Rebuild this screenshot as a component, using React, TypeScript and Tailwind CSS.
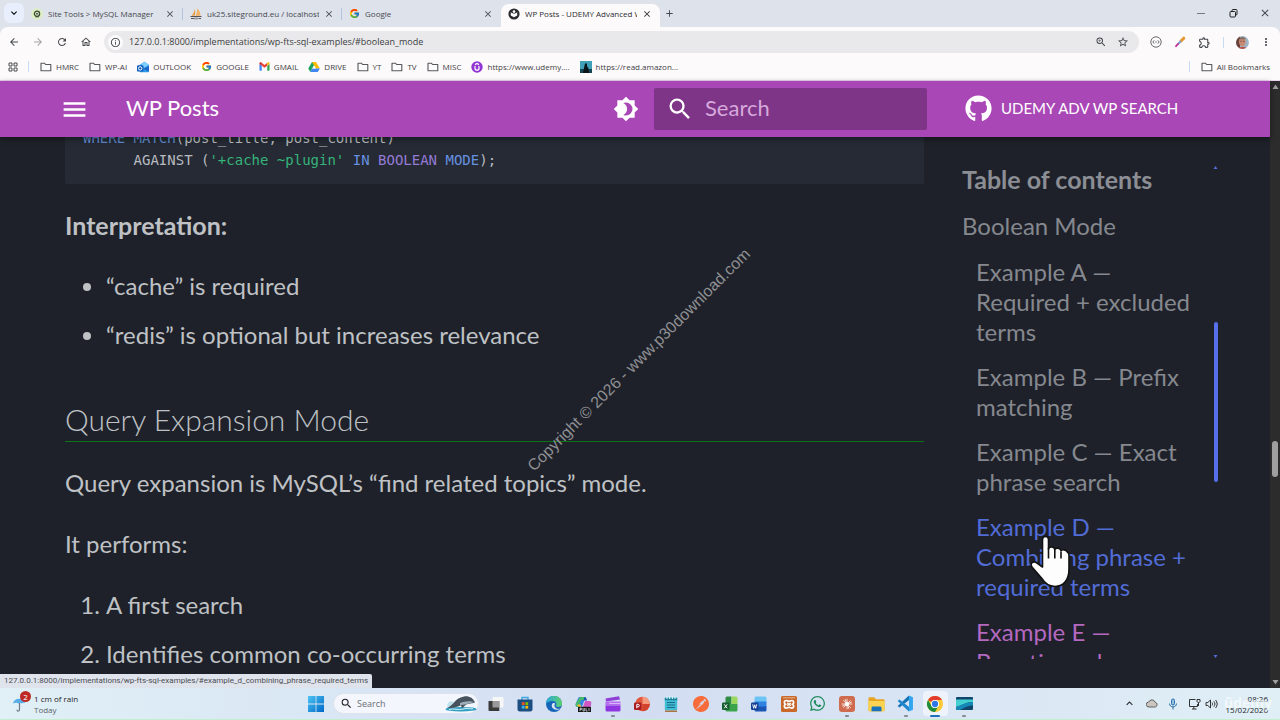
import React from 'react';
import { FaGithub, FaWhatsapp } from 'react-icons/fa';
import { FcGoogle } from 'react-icons/fc';
import { SiPostman } from 'react-icons/si';
import {
  MdAdd,
  MdArrowBack,
  MdArrowForward,
  MdClose,
  MdInfoOutline,
  MdKeyboardArrowDown,
  MdKeyboardArrowUp,
  MdMenu,
  MdMoreVert,
  MdOutlineExtension,
  MdOutlineHome,
  MdRefresh,
  MdSearch,
  MdStarBorder,
  MdZoomIn,
} from 'react-icons/md';

/* ---------- small drawings ---------- */

function FolderIcon() {
  return (
    <svg width="12" height="12" viewBox="0 0 12 12" fill="none" stroke="#55585c" strokeWidth="1.1">
      <path d="M1 2.2h3.4l1.2 1.3h5.2v6.3H1z" strokeLinejoin="round" />
    </svg>
  );
}

function SiteGroundIcon() {
  return (
    <svg width="12" height="12" viewBox="0 0 12 12">
      <circle cx="6" cy="6" r="5.8" fill="#dcefc0" />
      <circle cx="6" cy="5.8" r="2.6" fill="none" stroke="#3c4a3a" strokeWidth="1.3" />
      <circle cx="6" cy="5.8" r="1" fill="#4b5b47" />
      <path d="M4.4 8.8h3.4" stroke="#3c4a3a" strokeWidth="1" />
    </svg>
  );
}

function PhpMyAdminIcon() {
  return (
    <svg width="12" height="12" viewBox="0 0 12 12">
      <path d="M4.6 1c.8 2 .8 4.5.2 6.8H1.5C3.2 6 4.3 3.5 4.6 1z" fill="#e9a04a" />
      <path d="M7 .5c2.500 2 3.500 4.500 3.500 7.300H5.500C6.800 5.500 7.200 3 7 .5z" fill="#f3b263" />
      <path d="M.5 8.500h11M1 10.500h3M5 9.500v2M7 9.500v2M8.500 10.500H11" stroke="#55535a" strokeWidth="1" />
    </svg>
  );
}

function WpPostsIcon() {
  return (
    <svg width="12" height="12" viewBox="0 0 12 12">
      <circle cx="6" cy="6" r="5.600" fill="#2b2c30" />
      <path d="M2.800 4.600 6 5.800l3.200-1.200v3L6 9.200 2.800 7.600z" fill="#fff" />
      <circle cx="6" cy="3.600" r="1.300" fill="#fff" />
    </svg>
  );
}

function OutlookIcon() {
  return (
    <svg width="12" height="12" viewBox="0 0 12 12">
      <path d="M2.500 4 7.500.8 12 4v6.200c0 .6-.4 1-1 1H3.500c-.6 0-1-.4-1-1z" fill="#2f9be8" />
      <path d="M4 3 8 .8l3.800 3-4.300 3z" fill="#7fd0ff" />
      <path d="M12 5v5.500L6 7.800z" fill="#1c66c9" />
      <rect x="0" y="4.200" width="6.400" height="6.400" rx="1.200" fill="#1560bd" />
      <circle cx="3.200" cy="7.400" r="1.700" fill="none" stroke="#fff" />
    </svg>
  );
}

function GmailIcon() {
  return (
    <svg width="11" height="11" viewBox="0 0 24 24">
      <path d="M1 20V6.500l5 3.700V21H2.500A1.500 1.500 0 0 1 1 20z" fill="#4285f4" />
      <path d="M23 20V6.500l-5 3.700V21h3.500a1.500 1.500 0 0 0 1.500-1z" fill="#34a853" />
      <path d="M6 10.200V4l6 4.500L18 4v6.200l-6 4.500z" fill="#ea4335" />
      <path d="M1 5.500C1 3.200 3.600 2.200 5.200 3.400L6 4v6.200L1 6.500z" fill="#c5221f" />
      <path d="M23 5.500c0-2.300-2.600-3.300-4.200-2.100L18 4v6.200l5-3.700z" fill="#fbbc04" />
    </svg>
  );
}

function DriveIcon() {
  return (
    <svg width="12" height="12" viewBox="0 0 24 24">
      <path d="M8 2h8l-4 7-7.500 13L.5 15z" fill="#1ea362" />
      <path d="M16 2 8 2l7.700 13h8z" fill="#fbbc04" />
      <path d="M4.500 22h15l4.200-7H8.500z" fill="#4285f4" />
      <path d="m12 9 3.600 6H8.500z" fill="#fdfbfc" />
    </svg>
  );
}

function UdemyIcon() {
  return (
    <svg width="12" height="12" viewBox="0 0 12 12">
      <circle cx="6" cy="6" r="5.700" fill="#9234d4" />
      <path d="M4 5v2.200a2 2 0 0 0 4 0V5M4 3.600 6 2.500l2 1.100" fill="none" stroke="#fff" strokeWidth="1.200" />
    </svg>
  );
}

function KindleIcon() {
  return (
    <svg width="12" height="12" viewBox="0 0 12 12">
      <rect width="12" height="12" fill="#3fa0b8" />
      <path d="M0 8h12v4H0z" fill="#144656" />
      <path d="M5 2.500h2V5l1.500 2.500L9 12H3l1-5z" fill="#0b1418" />
    </svg>
  );
}

function PickerIcon() {
  return (
    <svg width="12" height="12" viewBox="0 0 12 12" strokeLinecap="round">
      <path d="M7 5 9.800 2.200" stroke="#e8962e" strokeWidth="3" />
      <path d="m4 8 2.500-2.500" stroke="#7a9bd0" strokeWidth="1.800" />
      <path d="M2 10.200 4 8" stroke="#c2288e" strokeWidth="1.800" />
    </svg>
  );
}

function BracketsIcon() {
  return (
    <svg width="12" height="12" viewBox="0 0 12 12" fill="none" stroke="#66696e">
      <circle cx="6" cy="6" r="5.200" />
      <path d="M4.200 4.300 2.800 6l1.400 1.700M7.800 4.300 9.200 6 7.800 7.700M5.200 6h1.600" />
    </svg>
  );
}

function AvatarIcon() {
  return (
    <svg width="13" height="13" viewBox="0 0 13 13">
      <clipPath id="face">
        <circle cx="6.500" cy="6.500" r="6.400" />
      </clipPath>
      <g clipPath="url(#face)">
        <rect width="13" height="13" fill="#9db4c4" />
        <rect width="4" height="13" fill="#6a3f3a" />
        <ellipse cx="6.300" cy="5.800" rx="3.300" ry="4.200" fill="#c98a72" />
        <path d="M3 3.200C4 .8 8.500.6 9.600 3.200z" fill="#7d6a60" />
        <path d="M2 13c.5-3 8.500-3 9 0z" fill="#b85348" />
        <path d="M4.300 5.300h1.600M6.900 5.300h1.600" stroke="#5a3b38" strokeWidth=".7" />
      </g>
    </svg>
  );
}

function ThemeIcon() {
  return (
    <svg width="26" height="26" viewBox="0 0 24 24" fill="#fff">
      <path d="M12 18c-.89 0-1.740-.2-2.500-.55C11.560 16.500 13 14.420 13 12s-1.440-4.500-3.500-5.450C10.260 6.200 11.110 6 12 6a6 6 0 0 1 6 6 6 6 0 0 1-6 6m8-9.310V4h-4.690L12 .69 8.690 4H4v4.690L.69 12 4 15.310V20h4.690L12 23.310 15.310 20H20v-4.690L23.310 12z" />
    </svg>
  );
}

function HandCursor() {
  return (
    <svg width="42" height="54" viewBox="0 0 42 54">
      <path
        d="M12.500 4.500C12.500.5 18.500.5 18.500 4.500V14c1-3 5.800-2.500 6.300.5 1.300-2.300 5.800-1.500 6.200 1.300 1.600-1.800 5.200-1 6.200 1.200C38.500 17.500 39 19 39 20.500V34c0 11-5.500 17.500-14 17.500-7 0-10.500-3.500-13.500-8.500L2 32c-2.500-4 1.500-6.500 5-4l5.500 4z"
        fill="#fdfdfd"
        stroke="#111"
        strokeWidth="1.600"
        strokeLinejoin="round"
      />
      <path d="M18.500 13v10.500M24.800 15v8.500M31 16.500v7" stroke="#111" strokeWidth="1.600" />
    </svg>
  );
}

/* ---------- taskbar icons ---------- */

const StartIcon = () => (
  <svg width="16" height="16" viewBox="0 0 16 16">
    <defs>
      <linearGradient id="win" x1="0" y1="0" x2="1" y2="1">
        <stop offset="0" stopColor="#4cc4f2" />
        <stop offset="1" stopColor="#0068c8" />
      </linearGradient>
    </defs>
    <path d="M0 0h7.600v7.600H0zM8.400 0H16v7.600H8.400zM0 8.400h7.600V16H0zM8.400 8.400H16V16H8.400z" fill="url(#win)" />
  </svg>
);

const WhaleArt = () => (
  <svg width="32" height="17" viewBox="0 0 32 17">
    <ellipse cx="16" cy="14.200" rx="15.500" ry="2.300" fill="#2f9fc4" />
    <path d="M3 13c-2-3 0-7 4-7l4 3-3 4z" fill="#bfe2ee" />
    <path d="M2 12.500C8 12 9 3 19 1.500c5-.8 9 1.500 11 6-4 1.200-6 1-9 2l-4 4-1-3.200C12 12 8 14 2 12.500z" fill="#46535f" />
    <path d="M15 8c4-1 9-2.500 14-1-5 1.500-9 3-14 3z" fill="#9fb0bb" />
    <path d="M4 14.500c5-1.500 9 1 14-.5 4-1.200 7 .3 10-.3" stroke="#d8f1f8" fill="none" />
  </svg>
);

const TaskViewIcon = () => (
  <svg width="16" height="16" viewBox="0 0 16 16">
    <rect x="4.500" y="1" width="11" height="10.500" rx="1" fill="#f7f7f7" />
    <path d="M.5 5h10.800v10H1.500a1 1 0 0 1-1-1z" fill="#3a3a3a" />
    <path d="M4.500 5h6.800v6.500H4.500z" fill="#9a9a9a" />
  </svg>
);

const StoreIcon = () => (
  <svg width="16" height="16" viewBox="0 0 16 16">
    <path d="M5 4V1.500h6V4" fill="none" stroke="#3fa7e0" strokeWidth="1.400" />
    <path d="M.5 3.500h15V13a2.500 2.500 0 0 1-2.500 2.500H3A2.500 2.500 0 0 1 .5 13z" fill="#1c4f80" />
    <path d="M4.800 6.200h2.800V9H4.800z" fill="#f25022" />
    <path d="M8.400 6.200h2.800V9H8.400z" fill="#7fba00" />
    <path d="M4.800 9.800h2.800v2.800H4.800z" fill="#33b5f0" />
    <path d="M8.400 9.800h2.800v2.800H8.400z" fill="#ffb900" />
  </svg>
);

const EdgeIcon = () => (
  <svg width="16" height="16" viewBox="0 0 16 16">
    <defs>
      <linearGradient id="edge" x1="0" y1="0" x2="1" y2="0">
        <stop offset="0" stopColor="#2aa7dc" />
        <stop offset="1" stopColor="#5fd06a" />
      </linearGradient>
    </defs>
    <circle cx="8" cy="8" r="8" fill="#1565b8" />
    <path d="M0 8a8 8 0 0 1 16-.5c0 2.500-1.800 3.500-3.600 3.500-2 0-2.900-.8-2.400-1.800C11 7 9.400 5 6.500 5 3 5 .3 7 0 8z" fill="url(#edge)" />
    <path d="M6.500 7.500c-2 2.500 0 6 4 6.200 1.800 0 3-.5 4-1.300-2 .7-5.500.3-6-2.500-.2-1 .3-1.700.8-2.200-.7-.8-2-.9-2.800-.2z" fill="#dbe4f4" />
  </svg>
);

const CopilotIcon = () => (
  <svg width="17" height="16" viewBox="0 0 17 16">
    <path d="M5 1h5.500L7 11H3C.5 11 .2 9 1 7l2-4.500C3.400 1.500 4 1 5 1z" fill="#2f86dd" />
    <path d="M5 1h5.500L9.500 4H6L3 11C.5 11 .2 9 1 7z" fill="#49b86a" />
    <path d="M9.500 1c2 0 2 2 2.500 3.500H8.500z" fill="#1b50b8" />
    <path d="M10 5h4c2.500 0 2.700 2 2 4l-1 3H7.500z" fill="#d058c4" />
    <path d="m2 9 3-1 2 4H4z" fill="#f2b83c" />
    <rect x="3" y="10.800" width="13" height="5.200" fill="#16171b" />
    <path d="M5 12v3M5 12.200h1.500v1.300H5M8 12v3h1.400v-3M11 12v3h1.500M14 12v3" stroke="#e8e8e8" strokeWidth=".7" fill="none" />
  </svg>
);

const ClapperIcon = () => (
  <svg width="16" height="16" viewBox="0 0 16 16">
    <path d="M.5 2.500 14 .2l1 3.300L1 5.600z" fill="#8d3fd6" />
    <path d="M.5 5.500h15v4H.5z" fill="#b46cf0" />
    <path d="M.5 9.500h15V14a1.500 1.500 0 0 1-1.500 1.500H2A1.500 1.500 0 0 1 .5 14z" fill="#9036e0" />
    <path d="M4 7.500h11.500" stroke="#dcb4fb" />
  </svg>
);

const PowerPointIcon = () => (
  <svg width="16" height="16" viewBox="0 0 16 16">
    <circle cx="8.500" cy="8" r="7.300" fill="#e0593c" />
    <path d="M8.500.7a7.300 7.300 0 0 1 7.300 7.300H8.500z" fill="#f59a7c" />
    <path d="M8.500 8h7.300a7.300 7.300 0 0 1-7.300 7.300z" fill="#d2432e" />
    <rect x="0" y="6.500" width="7.500" height="7.500" rx="1.200" fill="#a71d22" />
    <path d="M2.800 12.300V8.300h1.300c1.700 0 1.700 2.500 0 2.500H2.800" stroke="#fff" fill="none" />
  </svg>
);

const NotepadIcon = () => (
  <svg width="14" height="16" viewBox="0 0 14 16">
    <rect x=".8" y="1.200" width="12.400" height="13" rx="1" fill="#41bcd4" />
    <path d="M.8 2.200h12.400v2H.8z" fill="#1b7d98" />
    <path d="M3 .5v2.500M5.700.5v2.500M8.400.5v2.500M11 .5v2.500" stroke="#e8f7fa" />
    <path d="M3 6.500h8M3 9h8M3 11.500h8" stroke="#156d88" strokeWidth="1.100" />
    <path d="M1 15.200h12" stroke="#a2682f" strokeWidth="1.400" />
  </svg>
);

const ExcelIcon = () => (
  <svg width="16" height="16" viewBox="0 0 16 16">
    <path d="M3.500 2A1.500 1.500 0 0 1 5 .5h4.500V8h-6z" fill="#2e8c46" />
    <path d="M9.500.5H14A1.500 1.500 0 0 1 15.500 2v6h-6z" fill="#9bd85f" />
    <path d="M3.500 8h12v6a1.500 1.500 0 0 1-1.500 1.500H5A1.500 1.500 0 0 1 3.500 14z" fill="#3aa34c" />
    <rect x="0" y="6.500" width="7.500" height="7.500" rx="1.200" fill="#155c30" />
    <path d="m2.200 8.300 3 4M5.200 8.300l-3 4" stroke="#fff" />
  </svg>
);

const WordIcon = () => (
  <svg width="16" height="16" viewBox="0 0 16 16">
    <path d="M3.500 2A1.500 1.500 0 0 1 5 .5h9A1.500 1.500 0 0 1 15.500 2v4h-12z" fill="#6cc4f5" />
    <path d="M3.500 5.500h12V11h-12z" fill="#2f83e0" />
    <path d="M3.500 10.500h12V14a1.500 1.500 0 0 1-1.500 1.500H5A1.500 1.500 0 0 1 3.500 14z" fill="#1b56b5" />
    <rect x="0" y="6.500" width="7.500" height="7.500" rx="1.200" fill="#123f94" />
    <path d="m1.700 8.300 1 4 1-3.500 1 3.500 1-4" stroke="#fff" strokeWidth=".9" fill="none" />
  </svg>
);

const XamppIcon = () => (
  <svg width="16" height="16" viewBox="0 0 16 16">
    <rect width="16" height="16" rx="1.500" fill="#c8682b" />
    <path d="M2 1.800h12" stroke="#e8b48f" />
    <path
      d="M5.200 4.500c1 0 1.300.8 2.800.8s1.800-.8 2.800-.8c2.200 0 2.500 2.700.8 3.800 1.700 1.100 1.400 3.900-.8 3.900-1 0-1.300-.8-2.800-.8s-1.800.8-2.800.8c-2.200 0-2.500-2.800-.8-3.900-1.700-1.100-1.400-3.800.8-3.800z"
      fill="none"
      stroke="#fff"
      strokeWidth="1.700"
    />
    <path d="m6.200 7 3.600 2.600M9.800 7 6.200 9.600" stroke="#fff" strokeWidth="1.300" />
  </svg>
);

const BurstIcon = () => (
  <svg width="16" height="16" viewBox="0 0 16 16">
    <rect width="16" height="16" rx="3" fill="#cf6b4f" />
    <path
      d="M8 2.800v10.400M2.800 8h10.400M4.300 4.300l7.400 7.400M11.700 4.300l-7.400 7.400M6 3.200l4 9.600M3.200 10l9.600-4"
      stroke="#fff"
      strokeWidth=".8"
    />
    <circle cx="8" cy="8" r="2" fill="#fff" />
  </svg>
);

const ExplorerIcon = () => (
  <svg width="17" height="16" viewBox="0 0 17 16">
    <path d="M.5 2.500c0-.8.500-1.300 1.200-1.300h4.500L8 3.200h7.500c.6 0 1 .4 1 1V14c0 .8-.4 1.200-1 1.200h-14c-.6 0-1-.4-1-1z" fill="#e6a623" />
    <path d="M.5 5h16v9c0 .8-.4 1.200-1 1.200h-14c-.6 0-1-.4-1-1z" fill="#fbd353" />
    <path d="M3.500 15.200V12c0-.9.600-1.500 1.500-1.500h7c.9 0 1.500.6 1.500 1.500v3.200z" fill="#1672ba" />
  </svg>
);

const VsCodeIcon = () => (
  <svg width="17" height="17" viewBox="0 0 24 24">
    <path d="M17 1v6L3.500 17.500 1 15.500 16 1.500z" fill="#1673b8" />
    <path d="M17 23v-6L3.500 6.500 1 8.500l15 14z" fill="#1f86cc" />
    <path d="m17 .8 5.500 2.500v17.400L17 23.200z" fill="#31a5ee" />
  </svg>
);

const ChromeIcon = () => (
  <svg width="16" height="16" viewBox="0 0 24 24">
    <circle cx="12" cy="12" r="12" fill="#fcc934" />
    <path d="M1.600 6A12 12 0 0 1 22.400 6H12a6 6 0 0 0-5.200 3z" fill="#e33b2e" />
    <path d="M1.600 6a12 12 0 0 0 10.400 18l5.200-9a6 6 0 0 1-10.400 0z" fill="#1e8e3e" />
    <circle cx="12" cy="12" r="6" fill="#fff" />
    <circle cx="12" cy="12" r="4.700" fill="#2f76e8" />
  </svg>
);

const CaptureIcon = () => (
  <svg width="17" height="13" viewBox="0 0 17 13">
    <rect width="17" height="13" rx="1" fill="#10466c" />
    <path d="M0 2.500h17V5C10 5 7 8 0 10z" fill="#43d0d0" />
    <path d="M0 10c7-2 10-5 17-5v3.500C11 8.500 8 11 4 13H1a1 1 0 0 1-1-1z" fill="#1689b8" />
  </svg>
);

const UmbrellaIcon = () => (
  <svg width="16" height="18" viewBox="0 0 16 18">
    <path d="M1 8.500C2 3 10 1.500 13.500 8c-2-.8-3 0-3.500.5-1-.8-2.500-.8-3.500 0C5.500 7.500 3 7.500 1 8.500z" fill="#57aee8" />
    <path d="M7.500 8v6.500c0 2-2.500 2-2.500.3" stroke="#6d7a86" fill="none" strokeWidth="1.200" />
  </svg>
);

/* ---------- data ---------- */

const tabs = [
  { title: 'Site Tools > MySQL Manager', icon: <SiteGroundIcon /> },
  { title: 'uk25.siteground.eu / localhost /', icon: <PhpMyAdminIcon /> },
  { title: 'Google', icon: <FcGoogle size={11} /> },
  { title: 'WP Posts - UDEMY Advanced W', icon: <WpPostsIcon />, active: true },
];

const bookmarks = [
  { label: 'HMRC', icon: <FolderIcon /> },
  { label: 'WP-AI', icon: <FolderIcon /> },
  { label: 'OUTLOOK', icon: <OutlookIcon /> },
  { label: 'GOOGLE', icon: <FcGoogle size={11} /> },
  { label: 'GMAIL', icon: <GmailIcon /> },
  { label: 'DRIVE', icon: <DriveIcon /> },
  { label: 'YT', icon: <FolderIcon /> },
  { label: 'TV', icon: <FolderIcon /> },
  { label: 'MISC', icon: <FolderIcon /> },
  { label: 'https://www.udemy....', icon: <UdemyIcon /> },
  { label: 'https://read.amazon...', icon: <KindleIcon /> },
];

const tocItems = [
  { label: 'Example A — Required + excluded terms', color: 'text-[#85888e]' },
  { label: 'Example B — Prefix matching', color: 'text-[#85888e]' },
  { label: 'Example C — Exact phrase search', color: 'text-[#85888e]' },
  { label: 'Example D — Combining phrase + required terms', color: 'text-[#526cd6]' },
  { label: 'Example E — Boosting relevance', color: 'text-[#b468c0]' },
];

const apps = [
  { name: 'Task view', icon: <TaskViewIcon /> },
  { name: 'Store', icon: <StoreIcon /> },
  { name: 'Edge', icon: <EdgeIcon /> },
  { name: 'Copilot', icon: <CopilotIcon /> },
  { name: 'Clipchamp', icon: <ClapperIcon />, running: true },
  { name: 'PowerPoint', icon: <PowerPointIcon /> },
  { name: 'Notepad', icon: <NotepadIcon /> },
  { name: 'Postman', icon: <SiPostman size={16} color="#f76c3a" /> },
  { name: 'Excel', icon: <ExcelIcon /> },
  { name: 'Word', icon: <WordIcon /> },
  { name: 'XAMPP', icon: <XamppIcon /> },
  { name: 'WhatsApp', icon: <FaWhatsapp size={17} color="#1f8a5b" /> },
  { name: 'Claude', icon: <BurstIcon />, running: true },
  { name: 'Explorer', icon: <ExplorerIcon /> },
  { name: 'VS Code', icon: <VsCodeIcon />, running: true },
  { name: 'Chrome', icon: <ChromeIcon />, active: true },
  { name: 'Capture', icon: <CaptureIcon />, running: true },
];

/* ---------- browser chrome ---------- */

function TabStrip() {
  return (
    <div className="flex h-[27px] items-end bg-[#dee2eb] pl-1 text-[#45484d]">
      <button aria-label="Search tabs" className="mb-1 flex size-5 items-center justify-center rounded-md bg-[#e9eefc] text-black">
        <MdKeyboardArrowDown size={12} />
      </button>
      {tabs.map((tab, i) => (
        <div
          key={tab.title}
          className={`relative flex h-[23px] w-[159px] min-w-0 items-center gap-[5px] pr-2 pb-1 pl-[7px] ${
            tab.active ? 'rounded-t-lg bg-[#fdfafb] text-[#2c2d30]' : ''
          }`}
        >
          <span className="shrink-0">{tab.icon}</span>
          <span className="min-w-0 flex-1 overflow-hidden text-[8px] leading-4 whitespace-nowrap">{tab.title}</span>
          <button aria-label="Close tab" className="shrink-0">
            <MdClose size={10} />
          </button>
          {i < 2 && <span className="absolute top-1 right-0 h-3 w-px bg-[#b4c3de]" />}
        </div>
      ))}
      <button aria-label="New tab" className="mb-2 ml-1">
        <MdAdd size={11} />
      </button>
      <div className="mb-2 ml-auto flex items-center gap-5 pr-[9px]">
        <button aria-label="Minimise" className="flex size-[11px] items-center">
          <span className="h-px w-2 bg-[#77797e]" />
        </button>
        <button aria-label="Restore">
          <svg width="11" height="11" viewBox="0 0 11 11" fill="none" stroke="#222">
            <rect x="2" y="3.500" width="5.500" height="5.500" rx="1" />
            <path d="M4 3.500V2.500a1 1 0 0 1 1-1h3a1 1 0 0 1 1 1v3.500a1 1 0 0 1-1 1h-.5" />
          </svg>
        </button>
        <button aria-label="Close">
          <MdClose size={12} />
        </button>
      </div>
    </div>
  );
}

function Toolbar() {
  return (
    <div className="flex h-[30px] items-center rounded-t-lg bg-[#fdfafb] px-2 text-[#45484d]">
      <div className="flex items-center gap-3 pr-3">
        <button aria-label="Back"><MdArrowBack size={12} /></button>
        <button aria-label="Forward" className="text-[#a3a4a7]"><MdArrowForward size={12} /></button>
        <button aria-label="Reload"><MdRefresh size={12} /></button>
        <button aria-label="Home"><MdOutlineHome size={12} /></button>
      </div>
      <div className="flex h-[22px] flex-1 items-center rounded-full bg-[#e9e9eb] pr-2.5 pl-1">
        <span className="flex size-[15px] items-center justify-center rounded-full bg-[#fdfafb]">
          <MdInfoOutline size={11} />
        </span>
        <input
          aria-label="Address"
          className="ml-1.5 min-w-0 flex-1 bg-transparent text-[9px] text-[#3b3d41] outline-none"
          defaultValue="127.0.0.1:8000/implementations/wp-fts-sql-examples/#boolean_mode"
        />
        <button aria-label="Zoom"><MdZoomIn size={12} /></button>
        <button aria-label="Bookmark this page" className="ml-2.5"><MdStarBorder size={12} /></button>
      </div>
      <div className="flex items-center gap-3 pl-[11px]">
        <button aria-label="Code"><BracketsIcon /></button>
        <button aria-label="Colour picker"><PickerIcon /></button>
        <button aria-label="Extensions"><MdOutlineExtension size={13} /></button>
        <span className="h-[11px] w-px bg-[#c8daf5]" />
        <button aria-label="Profile"><AvatarIcon /></button>
        <button aria-label="Menu" className="-ml-px"><MdMoreVert size={12} /></button>
      </div>
    </div>
  );
}

function BookmarksBar() {
  return (
    <nav className="flex h-6 items-center border-b border-[#ecd3ee] bg-[#fdfafb] pr-2.5 pb-1 pl-2 text-[8px] whitespace-nowrap text-[#3f4145]">
      <svg width="10" height="10" viewBox="0 0 10 10" fill="none" stroke="#4b4d51">
        <path d="M1 1h3v3H1zM6 1h3v3H6zM1 6h3v3H1zM6 6h3v3H6z" />
      </svg>
      <span className="ml-2.5 h-[11px] w-px bg-[#c8daf5]" />
      <div className="ml-[11px] flex min-w-0 items-center gap-2.5 overflow-hidden">
        {bookmarks.map((b) => (
          <a key={b.label} href="#" className="flex shrink-0 items-center gap-1">
            {b.icon}
            {b.label}
          </a>
        ))}
      </div>
      <span className="ml-auto h-[11px] w-px bg-[#c8daf5]" />
      <a href="#" className="ml-[11px] flex items-center gap-1">
        <FolderIcon />
        All Bookmarks
      </a>
    </nav>
  );
}

/* ---------- documentation page ---------- */

function SiteHeader() {
  return (
    <header className="relative z-10 flex h-14 shrink-0 items-center bg-[#aa47b6] text-white shadow-[0_2px_6px_rgba(0,0,0,0.4)]">
      <button aria-label="Open navigation" className="ml-[60px]">
        <MdMenu size={29} />
      </button>
      <a href="#" className="ml-[37px] flex-1 pb-0.5 text-[22px] leading-7">WP Posts</a>
      <button aria-label="Switch theme">
        <ThemeIcon />
      </button>
      <label className="ml-[15px] flex h-[42px] w-[273px] items-center rounded-xs bg-[#7f3587] pl-3">
        <MdSearch size={28} />
        <input
          aria-label="Search"
          placeholder="Search"
          className="ml-[11px] w-40 bg-transparent pb-0.5 text-[22px] leading-7 outline-none placeholder:text-[#d6a9dc]"
        />
      </label>
      <a href="#" className="ml-[38px] flex w-[305px] items-center gap-[9px] pb-0.5 text-[15px]">
        <FaGithub size={27} />
        UDEMY ADV WP SEARCH
      </a>
    </header>
  );
}

function Article() {
  return (
    <article className="min-w-0 flex-1 text-[24px] leading-[38px] text-[#bfc1c5]">
      <pre className="-mt-2.5 rounded-xs bg-[#252a34] pb-[13px] pl-[18px] font-['DejaVu_Sans_Mono',monospace] text-[14px] leading-[22px] text-[#b9bbc1]">
        <span className="text-[#5f86cc]">WHERE MATCH</span>(post_title, post_content){'\n'}
        {'      '}AGAINST (<span className="text-[#35b37a]">'+cache ~plugin'</span>{' '}
        <span className="text-[#6791e0]">IN</span> <span className="text-[#957ad6]">BOOLEAN</span>{' '}
        <span className="text-[#6791e0]">MODE</span>);
      </pre>
      <p className="mt-[22px] text-[25px] font-bold">Interpretation:</p>
      <ul className="mt-[23px] flex list-disc flex-col gap-[11px] pl-[41px]">
        <li>“cache” is required</li>
        <li>“redis” is optional but increases relevance</li>
      </ul>
      <h2 className="mt-[46px] border-b border-b-[#0d7317] pb-0.5 text-[30px] leading-[39px] font-light">Query Expansion Mode</h2>
      <p className="mt-[22px]">Query expansion is MySQL’s “find related topics” mode.</p>
      <p className="mt-[23px]">It performs:</p>
      <ol className="mt-[23px] flex list-decimal flex-col gap-[11px] pl-[41px]">
        <li>A first search</li>
        <li>Identifies common co-occurring terms</li>
      </ol>
    </article>
  );
}

function TableOfContents() {
  return (
    <aside className="flex w-[308px] shrink-0 pt-7 pb-[29px] text-[24px] leading-[30px] text-[#85888e]">
      <nav className="w-[236px] overflow-hidden">
        <h3 className="text-[25px] leading-7 font-bold text-[#8b8e94]">Table of contents</h3>
        <a href="#" className="mt-[18px] block">Boolean Mode</a>
        <ul className="mt-4 flex flex-col gap-[15px] pl-3.5">
          {tocItems.map((item) => (
            <li key={item.label}>
              <a href="#" className={item.color}>{item.label}</a>
            </li>
          ))}
        </ul>
      </nav>
      <div className="ml-[15px] flex w-[5px] flex-col items-center">
        <svg width="5" height="5" viewBox="0 0 5 5"><path d="m2.500 1 2 3h-4z" fill="#526cd6" /></svg>
        <span className="mt-38 h-40 w-1 rounded-full bg-[#5570ea]" />
        <svg className="mt-auto" width="5" height="5" viewBox="0 0 5 5"><path d="m2.500 4 2-3h-4z" fill="#526cd6" /></svg>
      </div>
    </aside>
  );
}

function PageScrollbar() {
  return (
    <div className="flex w-2.5 shrink-0 flex-col items-center bg-[#2c2c2c] py-[3px]">
      <svg width="7" height="6" viewBox="0 0 7 6"><path d="m3.500.5 3 4.500h-6z" fill="#9f9f9f" /></svg>
      <span className="mt-[351px] h-9 w-1.5 rounded-full bg-[#9f9f9f]" />
      <svg className="mt-auto" width="7" height="6" viewBox="0 0 7 6"><path d="m3.500 5.500 3-4.500h-6z" fill="#9f9f9f" /></svg>
    </div>
  );
}

/* ---------- taskbar ---------- */

function Taskbar() {
  return (
    <footer className="relative grid h-8 shrink-0 grid-cols-[1fr_auto_1fr] items-center border-b border-[#c3efcf] bg-linear-to-r from-[#e0f0f6] via-[#d3ddf2] to-[#e0eff6] pr-1.5 pl-3 text-[8px] leading-[11px]">
      <div className="flex items-center gap-1.5">
        <span className="relative">
          <UmbrellaIcon />
          <span className="absolute -top-1 left-2 flex size-[11px] items-center justify-center rounded-full bg-[#bd2a25] text-white">
            2
          </span>
        </span>
        <span>
          <span className="block text-[#1f2226]">1 cm of rain</span>
          <span className="block text-[#5c6168]">Today</span>
        </span>
      </div>
      <div className="flex items-center">
        <button aria-label="Start" className="mr-[9px] ml-px"><StartIcon /></button>
        <label className="flex h-[21px] w-[146px] items-center rounded-full border border-[#dde2ec] bg-[#f3f6fc] pr-px pl-1.5 text-[#222]">
          <MdSearch size={13} />
          <input
            aria-label="Search the computer"
            placeholder="Search"
            className="ml-1 min-w-0 flex-1 bg-transparent text-[9px] outline-none placeholder:text-[#6b6f76]"
          />
          <WhaleArt />
        </label>
        <div className="ml-0.5 flex w-[498px] items-center">
          {apps.map((app) => (
            <button key={app.name} aria-label={app.name} className="relative flex h-[26px] flex-1 items-center justify-center">
              <span className={`flex h-[25px] w-[25px] items-center justify-center rounded-sm ${app.active ? 'bg-[#eef2fb]' : ''}`}>
                {app.icon}
              </span>
              {app.running && <span className="absolute bottom-0 h-0.5 w-1 rounded-full bg-[#858a93]" />}
              {app.active && <span className="absolute bottom-0 h-0.5 w-2.5 rounded-full bg-[#1b70b8]" />}
            </button>
          ))}
        </div>
      </div>
      <div className="flex items-center justify-end pr-1.5 text-[#25282c]">
        <button aria-label="Show hidden icons"><MdKeyboardArrowUp size={13} /></button>
        <svg className="ml-2.5" width="12" height="9" viewBox="0 0 12 9">
          <path d="M3 8a2.500 2.500 0 0 1-.3-5A3.500 3.500 0 0 1 9.200 3.200 2.500 2.500 0 0 1 9.300 8z" fill="#c9c6c2" stroke="#625f5c" />
        </svg>
        <svg className="ml-2.5" width="10" height="12" viewBox="0 0 10 12" fill="none" stroke="#2a6ea8">
          <rect x="3.500" y="1" width="3" height="6" rx="1.500" fill="#8fc0e6" />
          <path d="M1.500 5.500c0 4.500 7 4.500 7 0M5 9v2.500" />
        </svg>
        <svg className="ml-2.5" width="13" height="12" viewBox="0 0 13 12" fill="none" stroke="#333">
          <path d="M7.500 1.500h-6v7h8V6M4 11h4.500M5.800 8.500V11" />
          <path d="M9 1.500h3v2.200c0 1-3 1-3 0zM10.500 4.500V8" />
        </svg>
        <svg className="ml-1" width="13" height="12" viewBox="0 0 13 12" fill="none" stroke="#333">
          <path d="M1 4.500h1.800L5.500 2v8L2.800 7.500H1zM7 4.500c.8 1 .8 2 0 3M8.800 3.200c1.500 1.800 1.500 3.800 0 5.600M10.500 2c2.200 2.500 2.200 5.500 0 8" />
        </svg>
        <span className="relative ml-2 text-right">
          <span className="block">08:26</span>
          <span className="block">15/02/2026</span>
          <span className="absolute top-0 -right-1 text-[14px] leading-5 font-bold text-white/60">ûdemy</span>
        </span>
      </div>
    </footer>
  );
}

export default function App() {
  return (
    <div className="flex h-screen flex-col overflow-hidden bg-[#1e2129] font-['Open_Sans','Noto_Sans',sans-serif]">
      <div className="shrink-0 bg-[#dee2eb]">
        <TabStrip />
        <Toolbar />
        <BookmarksBar />
      </div>
      <div className="relative flex min-h-0 flex-1">
        <div className="flex min-w-0 flex-1 flex-col font-['Lato',sans-serif]">
          <SiteHeader />
          <main className="flex min-h-0 flex-1 gap-[38px] overflow-hidden pl-[65px]">
            <Article />
            <TableOfContents />
          </main>
        </div>
        <PageScrollbar />
        <div className="pointer-events-none absolute top-[279px] left-[639px] -translate-x-1/2 -translate-y-1/2 -rotate-45 font-['Liberation_Sans',sans-serif] text-[16px] whitespace-nowrap text-[#8f9094]">
          Copyright © 2026 - www.p30download.com
        </div>
        <div className="pointer-events-none absolute top-[454px] left-[1030px] z-20">
          <HandCursor />
        </div>
        <div className="absolute bottom-0 left-0 z-20 rounded-tr-xs bg-[#dfe3ec] px-1 font-[Roboto,sans-serif] text-[8px] leading-[14px] text-[#4b4e54]">
          127.0.0.1:8000/implementations/wp-fts-sql-examples/#example_d_combining_phrase_required_terms
        </div>
      </div>
      <Taskbar />
    </div>
  );
}
